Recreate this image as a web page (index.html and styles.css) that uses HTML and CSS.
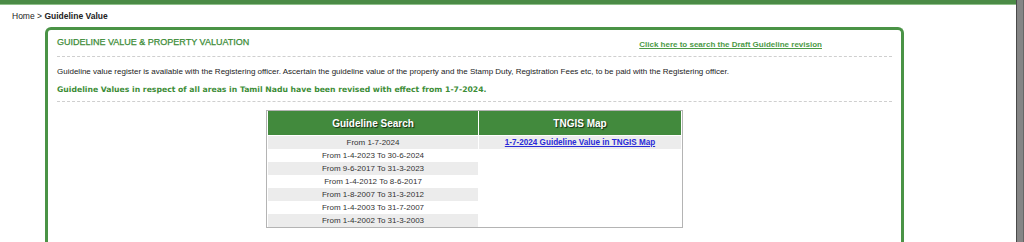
FILE: index.html
```html
<!DOCTYPE html>
<html lang="en">
<head>
    <meta charset="UTF-8">
    <title>Guideline Value</title>
    <link rel="stylesheet" href="styles.css">
</head>
<body>
    <div class="page">
        <div class="main">
            <div class="topbar"></div>
            <div class="crumb">Home &gt; <b>Guideline Value</b></div>

            <div class="panel">
                <div class="head">
                    <h2>GUIDELINE VALUE &amp; PROPERTY VALUATION</h2>
                    <a class="draft" href="#">Click here to search the Draft Guideline revision</a>
                </div>

                <div class="intro">
                    <p class="note">Guideline value register is available with the Registering officer. Ascertain the guideline value of the property and the Stamp Duty, Registration Fees etc, to be paid with the Registering officer.</p>
                    <p class="notice">Guideline Values in respect of all areas in Tamil Nadu have been revised with effect from 1-7-2024.</p>
                </div>

                <table class="search">
                    <thead>
                        <tr>
                            <th class="col-search">Guideline Search</th>
                            <th>TNGIS Map</th>
                        </tr>
                    </thead>
                    <tbody>
                        <tr>
                            <td class="alt">From 1-7-2024</td>
                            <td class="map" rowspan="7"><div class="alt"><a href="#">1-7-2024 Guideline Value in TNGIS Map</a></div></td>
                        </tr>
                        <tr><td>From 1-4-2023 To 30-6-2024</td></tr>
                        <tr><td class="alt">From 9-6-2017 To 31-3-2023</td></tr>
                        <tr><td>From 1-4-2012 To 8-6-2017</td></tr>
                        <tr><td class="alt">From 1-8-2007 To 31-3-2012</td></tr>
                        <tr><td>From 1-4-2003 To 31-7-2007</td></tr>
                        <tr><td class="alt">From 1-4-2002 To 31-3-2003</td></tr>
                    </tbody>
                </table>
            </div>
        </div>
        <div class="rail"></div>
    </div>
</body>
</html>
```

FILE: styles.css
```css
body { margin: 0; font-family: "Liberation Sans", Arial, sans-serif; background: #fff; color: #222; }
.page { display: flex; height: 242px; overflow: hidden; }
.main { flex: 1; }
.rail { width: 6px; background: #858585; border-left: 1px solid #4a4a4a; border-right: 1px solid #666; }
.topbar { height: 4px; background: #4b8b46; border-bottom: 1px solid #8fbf8a; }
.crumb { font-size: 8.5px; line-height: 12px; padding: 5px 0 0 12px; color: #222; }
.panel { margin: 5px 0 0 45px; width: 859px; box-sizing: border-box; border: 3px solid #4a9346; border-bottom: none; border-radius: 6px 6px 0 0; padding: 0 9px; height: 300px; }
.head { display: flex; align-items: flex-start; height: 20px; padding-top: 6px; border-bottom: 1px dashed #cfcfcf; }
.head h2 { margin: 0; font-size: 9px; line-height: 12px; font-weight: normal; color: #3c8c37; -webkit-text-stroke: 0.25px #3c8c37; }
.draft { margin: 3px 0 0 390px; font-size: 8px; line-height: 12px; font-weight: bold; color: #4c9a47; }
.intro { padding: 9px 0 6px; border-bottom: 1px dashed #cfcfcf; }
.note { margin: 0; font-size: 8px; line-height: 11px; color: #222; }
.notice { margin: 7px 0 0; font-family: "DejaVu Sans", Verdana, sans-serif; font-weight: bold; font-size: 7.7px; line-height: 11px; color: #3d8d37; }
.search { margin: 8px auto 0; width: 417px; border: 1px solid #b4b4b4; border-spacing: 1px 0; font-size: 8px; color: #333; }
.search th { background: #428a3d; color: #fff; font-size: 10px; height: 24px; padding: 0; border-bottom: 1px solid #fff; text-shadow: 1px 1px 1px rgba(0, 0, 0, 0.7); }
.search th.col-search { width: 210px; }
.search td { height: 13px; padding: 0; line-height: 13px; text-align: center; }
.search td.map { vertical-align: top; }
.alt { background: #ececec; }
.map a { color: #2a2ad8; font-weight: bold; font-size: 8.15px; }
```
